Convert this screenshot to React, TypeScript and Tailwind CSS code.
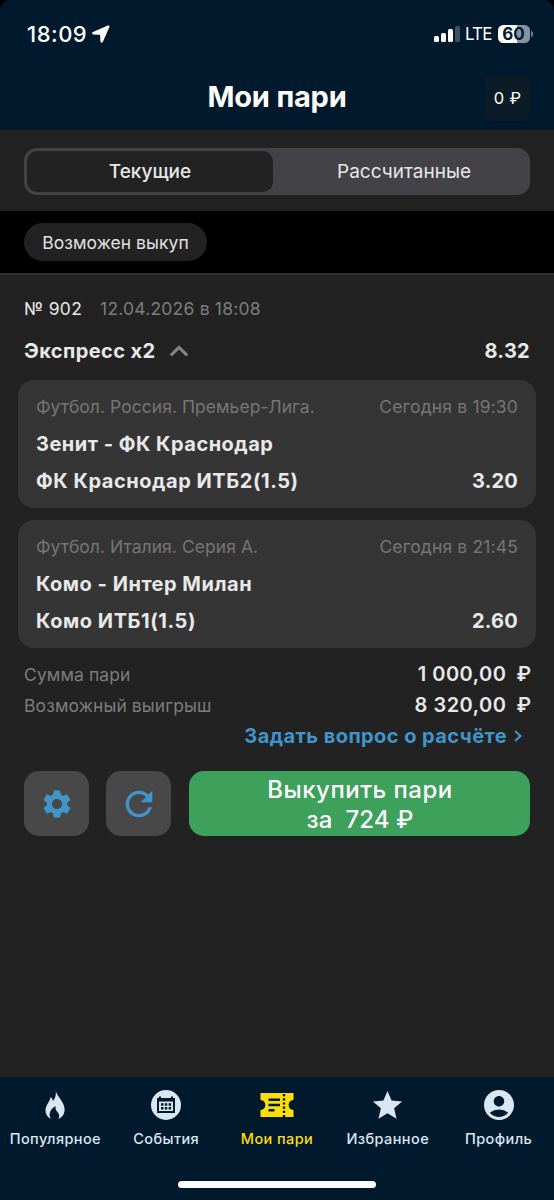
import { MdAccountCircle, MdRefresh, MdSettings, MdStar } from "react-icons/md"
import type { ReactNode } from "react"

type Leg = {
  league: string
  time: string
  match: string
  outcome: string
  odds: string
}

const legs: Leg[] = [
  {
    league: "Футбол. Россия. Премьер-Лига.",
    time: "Сегодня в 19:30",
    match: "Зенит - ФК Краснодар",
    outcome: "ФК Краснодар ИТБ2(1.5)",
    odds: "3.20",
  },
  {
    league: "Футбол. Италия. Серия А.",
    time: "Сегодня в 21:45",
    match: "Комо - Интер Милан",
    outcome: "Комо ИТБ1(1.5)",
    odds: "2.60",
  },
]

function StatusBar() {
  return (
    <div className="flex h-[68px] items-center justify-between pl-[27px] pr-[21px]">
      <div className="flex items-center gap-[5px]">
        <span className="text-[22px] font-medium leading-6 tracking-[0.5px]">18:09</span>
        <svg width="18" height="18" viewBox="0 0 18 18" fill="currentColor">
          <path d="M15.900.5 1 7C-.3 7.600-.1 9.500 1.300 9.500l6.300.2c.3 0 .5.2.5.5l.3 6.300c.1 1.400 1.900 1.600 2.500.3l6.500-14.700C17.900 1 17 .1 15.900.5Z" />
        </svg>
      </div>
      <div className="flex items-center">
        <svg width="26" height="16" viewBox="0 0 26 16" fill="currentColor">
          <rect x="0" y="10" width="5" height="6" rx="1.500" />
          <rect x="7" y="7" width="5" height="9" rx="1.500" />
          <rect x="14" y="3" width="5" height="13" rx="1.500" />
          <rect x="21" y="0" width="5" height="16" rx="1.500" opacity=".25" />
        </svg>
        <span className="ml-[5px] text-[17px] leading-6 tracking-[-0.9px]">LTE</span>
        <div className="ml-[6px] flex h-[18px] w-[32px] items-center justify-center rounded-[5.5px] bg-linear-to-r from-white from-60% to-[#8a939d] to-60% text-[17px] font-bold leading-[18px] text-[#001a2e]">
          60
        </div>
        <div className="ml-[1.5px] h-[6px] w-[2px] rounded-r-full bg-[#6f7a86]" />
      </div>
    </div>
  )
}

function Header() {
  return (
    <header className="h-[130px] bg-[#01192d] text-white">
      <StatusBar />
      <div className="grid h-[58px] grid-cols-[1fr_auto_1fr] items-center px-6">
        <span />
        <h1 className="text-[29px] font-bold leading-8 tracking-[-0.2px]">Мои пари</h1>
        <span className="mt-[2px] flex h-[45px] w-[45px] items-center justify-center justify-self-end rounded-md bg-[#0b1c26] text-[16.5px] leading-6 tracking-[0.3px]">
          0 ₽
        </span>
      </div>
    </header>
  )
}

function Tabs() {
  return (
    <div className="h-[81px] bg-[#222222] px-6 pt-[18px]">
      <div className="flex h-[47px] rounded-[13px] bg-[#434246] p-[3px] text-[19px] text-[#e8e8e8]">
        <div className="flex w-[246px] items-center justify-center rounded-[10px] bg-[#222222] pt-[2px] font-medium">
          Текущие
        </div>
        <div className="flex flex-1 items-center justify-center pl-[8px] pt-[2px]">Рассчитанные</div>
      </div>
    </div>
  )
}

function LegCard({ leg }: { leg: Leg }) {
  return (
    <div className="h-[128px] rounded-[16px] bg-[#353535] px-[18px] pt-[15px]">
      <div className="flex justify-between text-[17.500px] leading-6 text-[#757575]">
        <span className="tracking-[0.05px]">{leg.league}</span>
        <span className="tracking-[0.15px]">{leg.time}</span>
      </div>
      <div className="mt-[13px] text-[20px] font-bold leading-6 tracking-[0.5px]">{leg.match}</div>
      <div className="mt-[13px] flex justify-between text-[20px] font-bold leading-6">
        <span className="tracking-[0.550px]">{leg.outcome}</span>
        <span className="tracking-[0.2px]">{leg.odds}</span>
      </div>
    </div>
  )
}

function Total({ label, value }: { label: string; value: string }) {
  return (
    <div className="flex h-[31px] items-center justify-between">
      <span className="mt-[3px] text-[17.500px] tracking-[0.1px] text-[#7d7d7d]">{label}</span>
      <span className="-mr-px flex gap-[10px] text-[20px] font-semibold">
        <span className="tracking-[0.5px]">{value}</span>
        <span>₽</span>
      </span>
    </div>
  )
}

function Bet() {
  return (
    <main className="flex-1 border-t-2 border-[#303030] bg-[#222222] pt-[22px] text-[#e8e8e8]">
      <div className="flex gap-[18px] px-6 text-[17.500px] leading-6">
        <span className="tracking-[0.3px]">№ 902</span>
        <span className="tracking-[0.2px] text-[#7d7d7d]">12.04.2026 в 18:08</span>
      </div>
      <div className="mt-[18px] flex items-center px-6 text-[20px] font-bold leading-6">
        <span className="tracking-[0.4px]">Экспресс x2</span>
        <svg className="ml-[14px]" width="20" height="12" viewBox="0 0 20 12" fill="none" stroke="#858585" strokeWidth="3">
          <path d="M1.800 10.300 10 2.400l8.200 7.900" />
        </svg>
        <span className="ml-auto tracking-[0.3px]">8.32</span>
      </div>
      <div className="mt-[17px] flex flex-col gap-3 px-[18px]">
        {legs.map((leg) => (
          <LegCard key={leg.match} leg={leg} />
        ))}
      </div>
      <div className="px-6 pt-[10px]">
        <Total label="Сумма пари" value="1 000,00" />
        <Total label="Возможный выигрыш" value="8 320,00" />
        <div className="flex h-[31px] items-center justify-end pr-[8px] text-[20px] font-bold text-[#4096ca]">
          <span className="tracking-[0.430px]">Задать вопрос о расчёте</span>
          <svg className="ml-[7px]" width="8" height="12" viewBox="0 0 8 12" fill="none" stroke="currentColor" strokeWidth="2">
            <path d="m1 1 5.500 5L1 11" />
          </svg>
        </div>
      </div>
      <div className="mt-5 flex gap-[17px] px-6">
        <button className="flex size-[65px] items-center justify-center rounded-[15px] bg-[#484848] text-[#4096ca]">
          <MdSettings size={34} />
        </button>
        <button className="flex size-[65px] items-center justify-center rounded-[15px] bg-[#484848] text-[#4096ca]">
          <MdRefresh size={40} />
        </button>
        <button className="ml-px flex h-[65px] flex-1 flex-col items-center justify-center rounded-[15px] bg-[#3ea15b] pl-px pt-[2px] text-[24px] font-medium leading-[29.500px] text-white">
          <span className="tracking-[0.5px]">Выкупить пари</span>
          <span className="whitespace-pre tracking-[0.1px]">за  724 ₽</span>
        </button>
      </div>
    </main>
  )
}

function FlameIcon() {
  return (
    <svg width="20" height="30" viewBox="0 0 20 30" fill="currentColor">
      <path d="M10.800.5C11.300 6 19.600 11.500 19.600 19.500c0 4.700-2.500 8-6.100 9.500 1.200-2.300.9-4.700-.6-6.400-1.400-1.600-2.900-3.200-2.300-6.600-3.700 2-6 5-6 8.500 0 1.700.6 3.200 1.400 4.500C2.600 27.500.5 24.400.5 20.600.5 14.800 4.900 11.800 5.700 7c1.600 1.200 2.200 2.600 2 4.300C10.300 8.200 11.400 4.600 10.800.5Z" />
    </svg>
  )
}

function EventsIcon() {
  return (
    <svg width="30" height="30" viewBox="0 0 30 30">
      <circle cx="15" cy="15" r="15" fill="currentColor" />
      <path fill="#01192d" d="M8 6.500h2V8h10V6.500h2V8h2v15H6V8h2Z" />
      <path fill="currentColor" d="M8 11.500h14V21H8Z" />
      <path
        fill="#01192d"
        d="M10 13.300h2.500v2.500H10Zm3.800 0h2.500v2.500h-2.500Zm3.800 0h2.500v2.500h-2.500ZM10 17h2.500v2.500H10Zm3.800 0h2.500v2.500h-2.500Zm3.800 0h2.500v2.500h-2.500Z"
      />
    </svg>
  )
}

function TicketIcon() {
  return (
    <svg width="34" height="24" viewBox="0 0 34 24">
      <path fill="currentColor" d="M.5 0h33v7c-6.500 0-6.500 10 0 10v7H.5v-7c6.500 0 6.500-10 0-10Z" />
      <path stroke="#01192d" strokeWidth="2.400" d="M8.500 6.800h11.500M8.500 12h11.500M8.500 17.200h6" />
      <path stroke="#01192d" strokeWidth="2.400" strokeDasharray="2.200 2" d="M24 1v23" />
    </svg>
  )
}

function NavItem({ icon, label, active }: { icon: ReactNode; label: string; active?: boolean }) {
  return (
    <div className={`flex flex-1 flex-col items-center ${active ? "text-[#fddf06]" : "text-[#d9e7f3]"}`}>
      <div className="flex h-[30px] items-center">{icon}</div>
      <span className="mt-[9px] whitespace-nowrap text-[14.500px] font-medium leading-5 tracking-[0.4px]">{label}</span>
    </div>
  )
}

function BottomNav() {
  return (
    <nav className="h-[123px] bg-[#01192d] pt-[13px]">
      <div className="flex">
        <NavItem icon={<FlameIcon />} label="Популярное" />
        <NavItem icon={<EventsIcon />} label="События" />
        <NavItem icon={<TicketIcon />} label="Мои пари" active />
        <NavItem icon={<MdStar size={35} />} label="Избранное" />
        <NavItem icon={<MdAccountCircle size={36} />} label="Профиль" />
      </div>
      <div className="mx-auto mt-[32px] h-[7px] w-[198px] rounded-full bg-white" />
    </nav>
  )
}

export default function App() {
  return (
    <div className="bg-black">
      <div className="flex h-[1200px] w-[554px] flex-col overflow-hidden rounded-t-[10px] bg-black font-['Inter',sans-serif]">
        <Header />
        <Tabs />
        <div className="flex h-[62px] items-center px-6">
          <span className="flex h-[38px] w-[183px] items-center justify-center rounded-full bg-[#222222] pt-[2px] text-[17.500px] tracking-[0.05px] text-[#e0e0e0]">
            Возможен выкуп
          </span>
        </div>
        <Bet />
        <BottomNav />
      </div>
    </div>
  )
}
